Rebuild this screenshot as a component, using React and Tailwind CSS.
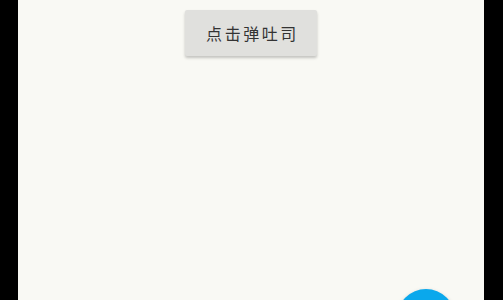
export default function App() {
  return (
    <div className="w-[503px] h-[300px] bg-black flex overflow-hidden">
      {/* 内容区域 */}
      <div className="relative ml-[18px] w-[466px] h-[300px] bg-[#f9f9f4] flex flex-col items-center overflow-hidden">
        <button className="mt-[10px] w-[132px] h-[46px] pl-[3px] bg-[#e0e0dd] rounded-[2px] shadow-[0_2px_3px_rgba(0,0,0,0.22)] text-[16px] tracking-[0.16em] text-[#333333] font-['Noto_Sans_CJK_SC',sans-serif]">
          点击弹吐司
        </button>

        {/* 悬浮按钮 */}
        <div className="absolute left-[379px] top-[289px] w-[58px] h-[58px] rounded-full bg-[#0aa8ec] shadow-[0_2px_4px_rgba(0,0,0,0.25)]"></div>
      </div>
    </div>
  );
}
